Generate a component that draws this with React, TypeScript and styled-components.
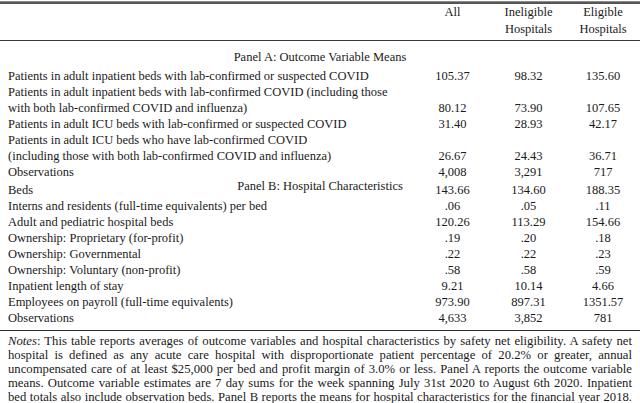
import React from "react";
import styled, { createGlobalStyle } from "styled-components";

const GlobalStyle = createGlobalStyle`
  body {
    margin: 0;
    background: #ffffff;
  }
`;

const Page = styled.div`
  width: 640px;
  height: 403px;
  overflow: hidden;
  font-family: "Liberation Serif", "Times New Roman", serif;
  font-size: 12.5px;
  color: #1a1a1a;
  display: flex;
  flex-direction: column;
`;

const TopRule = styled.div`
  margin-top: 1px;
  height: 1px;
  border-top: 1px solid #8c8c8c;
  border-bottom: 2px solid #555555;
`;

const Row = styled.div`
  display: grid;
  grid-template-columns: 414px 77px 75px 74px;
  align-items: end;
  line-height: 16px;
  flex-shrink: 0;
`;

const HeaderRow = styled(Row)`
  align-items: start;
  height: 37px;
  padding-top: 0;
  box-sizing: border-box;
  line-height: 17px;
  border-bottom: 1.5px solid #3a3a3a;
`;

const Label = styled.div`
  padding-left: 8px;
  white-space: nowrap;
`;

const Cell = styled.div`
  text-align: center;
  white-space: nowrap;
`;

const PanelTitle = styled.div<{ $overlap?: boolean }>`
  text-align: center;
  line-height: 16px;
  height: 16px;
  flex-shrink: 0;
  margin: ${({ $overlap }) => ($overlap ? "-2px 0 -12px" : "8px 0 3px")};
`;

const BottomRule = styled.div`
  margin-top: 4px;
  border-top: 1.5px solid #2e2e2e;
  flex-shrink: 0;
`;

const Notes = styled.div`
  padding: 3px 8px 0;
  font-size: 12.7px;
  line-height: 14px;
`;

const NoteLine = styled.div`
  text-align: justify;
  text-align-last: justify;
  white-space: nowrap;
`;

type Line = { label: string[]; values: string[] };

const panelA: Line[] = [
  {
    label: ["Patients in adult inpatient beds with lab-confirmed or suspected COVID"],
    values: ["105.37", "98.32", "135.60"],
  },
  {
    label: [
      "Patients in adult inpatient beds with lab-confirmed COVID (including those",
      "with both lab-confirmed COVID and influenza)",
    ],
    values: ["80.12", "73.90", "107.65"],
  },
  {
    label: ["Patients in adult ICU beds with lab-confirmed or suspected COVID"],
    values: ["31.40", "28.93", "42.17"],
  },
  {
    label: [
      "Patients in adult ICU beds who have lab-confirmed COVID",
      "(including those with both lab-confirmed COVID and influenza)",
    ],
    values: ["26.67", "24.43", "36.71"],
  },
  { label: ["Observations"], values: ["4,008", "3,291", "717"] },
];

const panelB: Line[] = [
  { label: ["Beds"], values: ["143.66", "134.60", "188.35"] },
  {
    label: ["Interns and residents (full-time equivalents) per bed"],
    values: [".06", ".05", ".11"],
  },
  { label: ["Adult and pediatric hospital beds"], values: ["120.26", "113.29", "154.66"] },
  { label: ["Ownership: Proprietary (for-profit)"], values: [".19", ".20", ".18"] },
  { label: ["Ownership: Governmental"], values: [".22", ".22", ".23"] },
  { label: ["Ownership: Voluntary (non-profit)"], values: [".58", ".58", ".59"] },
  { label: ["Inpatient length of stay"], values: ["9.21", "10.14", "4.66"] },
  {
    label: ["Employees on payroll (full-time equivalents)"],
    values: ["973.90", "897.31", "1351.57"],
  },
  { label: ["Observations"], values: ["4,633", "3,852", "781"] },
];

const noteLines = [
  "This table reports averages of outcome variables and hospital characteristics by safety net eligibility. A safety net",
  "hospital is defined as any acute care hospital with disproportionate patient percentage of 20.2% or greater, annual",
  "uncompensated care of at least $25,000 per bed and profit margin of 3.0% or less. Panel A reports the outcome variable",
  "means. Outcome variable estimates are 7 day sums for the week spanning July 31st 2020 to August 6th 2020. Inpatient",
  "bed totals also include observation beds. Panel B reports the means for hospital characteristics for the financial year 2018.",
];

const DataRow: React.FC<{ line: Line }> = ({ line }) => (
  <Row>
    <Label>
      {line.label.map((l) => (
        <div key={l}>{l}</div>
      ))}
    </Label>
    {line.values.map((v, i) => (
      <Cell key={i}>{v}</Cell>
    ))}
  </Row>
);

export default function App() {
  return (
    <>
      <GlobalStyle />
      <Page>
        <TopRule />
        <HeaderRow>
          <Label />
          <Cell>All</Cell>
          <Cell>
            Ineligible
            <br />
            Hospitals
          </Cell>
          <Cell>
            Eligible
            <br />
            Hospitals
          </Cell>
        </HeaderRow>
        <PanelTitle>Panel A: Outcome Variable Means</PanelTitle>
        {panelA.map((line, i) => (
          <DataRow key={"a" + i} line={line} />
        ))}
        <PanelTitle $overlap>Panel B: Hospital Characteristics</PanelTitle>
        {panelB.map((line, i) => (
          <DataRow key={"b" + i} line={line} />
        ))}
        <BottomRule />
        <Notes>
          {noteLines.map((t, i) => (
            <NoteLine key={i}>
              {i === 0 && <i>Notes</i>}
              {i === 0 ? ": " + t : t}
            </NoteLine>
          ))}
        </Notes>
      </Page>
    </>
  );
}
